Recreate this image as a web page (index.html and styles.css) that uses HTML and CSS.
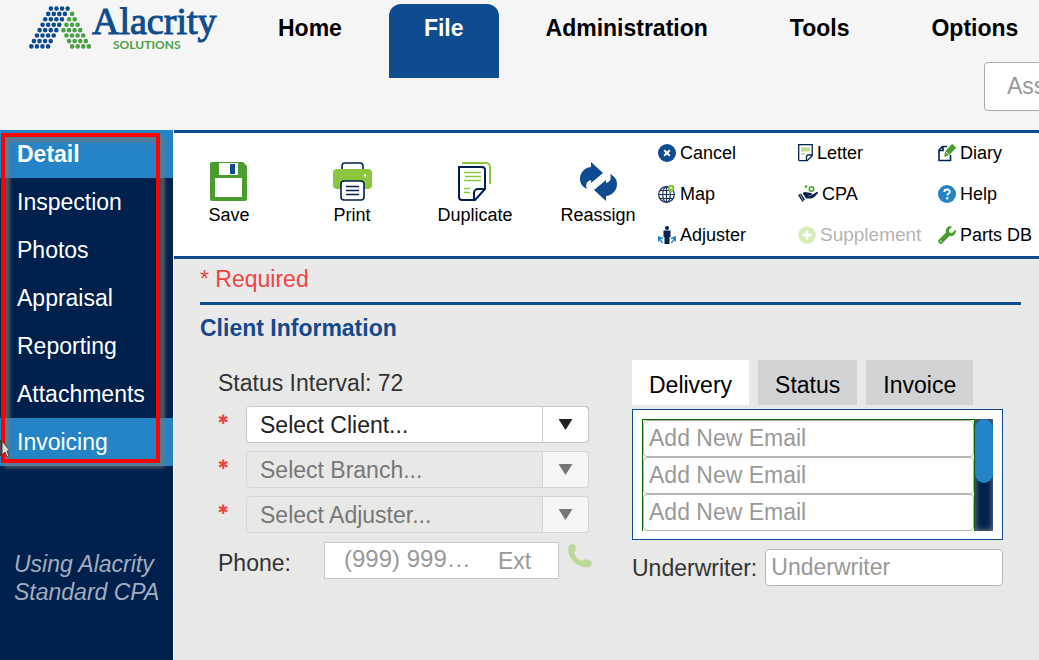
FILE: index.html
```html
<!DOCTYPE html>
<html lang="en">
<head>
<meta charset="utf-8">
<title>Alacrity Solutions</title>
<link rel="stylesheet" href="styles.css">
</head>
<body>
<header class="header">
  <div class="header-row">
    <div class="logo">
      <svg class="logo-mark" viewBox="87 20 187 128" width="62" height="43" fill="none" stroke-width="14" stroke-linecap="round" stroke-dasharray="0 16.8" aria-hidden="true">
        <path stroke="#0f4c8f" d="M153 27h51M145 43h51M136 59h51M128 76h51M119 92h51M111 108h51M102 125h51M94 141h51"/>
        <path stroke="#4ba046" d="M217 43h1M208 59h17M200 76h34M191 92h51M200 108h51M208 125h51M217 141h51"/>
      </svg>
      <div class="logo-text">
        <span class="logo-name">Alacrity</span>
        <span class="logo-sub">SOLUTIONS</span>
      </div>
    </div>
    <nav class="nav">
      <a href="#">Home</a>
      <a href="#" class="nav-active">File</a>
      <a href="#">Administration</a>
      <a href="#">Tools</a>
      <a href="#">Options</a>
    </nav>
  </div>
  <input class="search" type="text" placeholder="Ass" aria-label="Search">
</header>

<div class="page">
  <aside class="sidebar">
    <nav class="side-nav">
      <a href="#" class="side-current side-bold">Detail</a>
      <a href="#">Inspection</a>
      <a href="#">Photos</a>
      <a href="#">Appraisal</a>
      <a href="#">Reporting</a>
      <a href="#">Attachments</a>
      <a href="#" class="side-current">Invoicing</a>
      <span class="callout"></span>
      <svg class="cursor" width="11" height="18" viewBox="0 0 11 18" aria-hidden="true">
        <path d="M0 1h1v14H0z" fill="#fff" stroke="#111"/>
        <path d="M2 1v14l3-3 2 5 2-1-2-5h3z" fill="#ddd" stroke="#444"/>
      </svg>
    </nav>
    <p class="side-note">Using Alacrity Standard CPA</p>
  </aside>

  <main class="main">
    <div class="toolbar">
      <div class="big-tools">
        <button type="button" class="big-tool">
          <svg width="38" height="39" viewBox="0 0 38 39"><path d="M2 0h31l4 4v33a2 2 0 0 1-2 2H2a2 2 0 0 1-2-2V2a2 2 0 0 1 2-2z" fill="#4a9c2d"/><path d="M9 1h19v12H9zM5 16h27v19H5z" fill="#fff"/><path d="M20 2h5v10h-5z" fill="#0f4c8f"/></svg>
          Save
        </button>
        <button type="button" class="big-tool">
          <svg width="39" height="39" viewBox="0 0 39 39"><path d="M9 8V4a3 3 0 0 1 3-3h15a3 3 0 0 1 3 3v4" fill="none" stroke="#00204e" stroke-width="1.6"/><rect y="7" width="39" height="20" rx="4" fill="#8cc63f"/><circle cx="32" cy="13.500" r="1.200" fill="#fff"/><rect x="8" y="19" width="23" height="19" rx="3" fill="#fff" stroke="#00204e" stroke-width="1.6"/><path d="M13 24.500h13M13 28.500h13M13 32.500h13" stroke="#00204e" stroke-width="1.6"/></svg>
          Print
        </button>
        <button type="button" class="big-tool">
          <svg width="34" height="39" viewBox="0 0 34 39" fill="none"><path d="M4 1h24a4 4 0 0 1 4 4v17" stroke="#8cc63f" stroke-width="2"/><path d="M2 5h22a3 3 0 0 1 3 3v19L17 38H4a3 3 0 0 1-3-3V5z" fill="#fff" stroke="#00204e" stroke-width="2"/><path d="M16 38v-7a4 4 0 0 1 4-4h7" stroke="#00204e" stroke-width="2"/><path d="M6 10.500h17M7 14.500h16M6 18.500h17M6 26.500h6M6 30.500h6" stroke="#8cc63f" stroke-width="1.500"/></svg>
          Duplicate
        </button>
        <button type="button" class="big-tool">
          <svg width="37" height="39" viewBox="0 0 37 39" fill="#0f4c8f"><path d="M11 0v5C3 6 0 12 0 17c0 5 3 8 7 10-2-5 0-8 4-9v3L23 11z"/><path d="M26 39v-5c8-1 11-7 11-12 0-5-3-8-7-10 2 5 0 8-4 9v-3L14 28z"/></svg>
          Reassign
        </button>
      </div>
      <div class="small-tools">
        <button type="button" class="small-tool">
          <svg width="18" height="18" viewBox="0 0 18 18"><circle cx="9" cy="9" r="9" fill="#0f4c8f"/><path d="m6.200 6.200 5.600 5.600m0-5.600-5.600 5.600" stroke="#fff" stroke-width="2"/></svg>
          Cancel
        </button>
        <button type="button" class="small-tool">
          <svg width="15" height="18" viewBox="0 0 15 18" fill="none"><path d="M.7.700h13.500v11l-5 5H2a1.300 1.300 0 0 1-1.300-1.300z" stroke="#00204e" stroke-width="1.300"/><path d="M8.500 16.500V13a2 2 0 0 1 2-2H14" stroke="#00204e" stroke-width="1.300"/><path d="M3 3.500h9v4H3zM3 9h4v1.500H3z" fill="#b9dc8c"/></svg>
          Letter
        </button>
        <button type="button" class="small-tool">
          <svg width="18" height="18" viewBox="0 0 18 18" fill="none"><path d="M5.500 2.500h-1L1 6v10.500h11.500V11M1 6.500h4V3M5 2.500h4" stroke="#00204e" stroke-width="1.600"/><path d="m6 13 1.500-6L13.500.500a1 1 0 0 1 1.500 0l2.500 2.500a1 1 0 0 1 0 1.500L11 11z" fill="#4a9c2d"/><path d="m8 8 2.500 2.500" stroke="#fff"/></svg>
          Diary
        </button>
        <button type="button" class="small-tool">
          <svg width="18" height="18" viewBox="0 0 18 18" fill="none"><circle cx="8.500" cy="9.500" r="7.800" stroke="#1d3765" stroke-width="1.300"/><ellipse cx="8.500" cy="9.500" rx="3.800" ry="7.800" stroke="#1d3765" stroke-width="1.200"/><path d="M8.500 2v15M1 9.500h15M2 5.500h13M2 13.500h13" stroke="#1d3765" stroke-width="1.200"/><path d="M13 8.500C11 5.500 10 4.500 10 3a3 3 0 0 1 6.500 0c0 1.500-1.500 2.500-3.500 5.500z" fill="#8cc63f"/><circle cx="13.200" cy="3" r="1" fill="#fff"/></svg>
          Map
        </button>
        <button type="button" class="small-tool">
          <svg width="20" height="17" viewBox="0 0 20 17" fill="none"><path d="m0 10 3-1.500 4 6L4.500 17zM4.500 8C8 6 9 8 13 8c1 0 1 2 0 2H9.500c3 1 5 0 9-3 1-.5 2 .5 1 1.500-3 4-5 5-8 5H8z" fill="#00204e"/><path d="M2 9.500 5.500 16" stroke="#fff" stroke-width=".6"/><circle cx="13.500" cy="4" r="2.200" stroke="#4a9c2d" stroke-width="1.600"/><circle cx="8" cy="1.500" r="1.300" fill="#4a9c2d"/></svg>
          CPA
        </button>
        <button type="button" class="small-tool">
          <svg width="18" height="18" viewBox="0 0 18 18"><circle cx="9" cy="9" r="9" fill="#2484c6"/><path d="M6.200 7c.2-3.500 5.800-3.200 5.600 0-.1 1.600-2.500 1.600-2.500 3.500" fill="none" stroke="#fff" stroke-width="1.800"/><circle cx="9.200" cy="13.300" r="1.200" fill="#fff"/></svg>
          Help
        </button>
        <button type="button" class="small-tool">
          <svg width="18" height="18" viewBox="0 0 18 18" fill="none"><circle cx="9" cy="2" r="2" fill="#00204e"/><path d="M5.500 4.500h7V11h-1v7h-5v-7h-1z" fill="#00204e"/><path d="M5 16.500c-1 0-2.500-2-3.500-4.500M.7 15.500V11L5 12.500M13 16.500c1 0 2.500-2 3.500-4.500M17.300 15.500V11L13 12.500" stroke="#2484c6" stroke-width="1.500"/></svg>
          Adjuster
        </button>
        <button type="button" class="small-tool small-tool-off" disabled>
          <svg width="18" height="18" viewBox="0 0 18 18"><circle cx="9" cy="9" r="8.700" fill="#d7ebbb"/><path d="M9 4.500v9M4.500 9h9" stroke="#fff" stroke-width="2.600"/></svg>
          Supplement
        </button>
        <button type="button" class="small-tool">
          <svg width="18" height="18" viewBox="0 0 18 18"><path d="M14 .500 11 4l.5 2.500L14 7l3.500-3.500c1 3.500-1.500 7.500-6 6.500l-7 7A2.400 2.400 0 0 1 1 13.500l7-7C7 2.500 10.500-.5 14 .500z" fill="#4a9c2d"/><circle cx="2.800" cy="15.200" r=".8" fill="#fff"/></svg>
          Parts DB
        </button>
      </div>
    </div>

    <form class="content">
      <p class="required">* Required</p>
      <h2 class="section-title">Client Information</h2>
      <div class="panel">
        <div class="col-left">
          <p class="status">Status Interval: 72</p>
          <div class="field">
            <span class="star">✱</span>
            <div class="combo">
              <select aria-label="Client"><option>Select Client...</option></select>
              <span class="combo-arrow"></span>
            </div>
          </div>
          <div class="field">
            <span class="star">✱</span>
            <div class="combo combo-off">
              <select aria-label="Branch" disabled><option>Select Branch...</option></select>
              <span class="combo-arrow"></span>
            </div>
          </div>
          <div class="field">
            <span class="star">✱</span>
            <div class="combo combo-off">
              <select aria-label="Adjuster" disabled><option>Select Adjuster...</option></select>
              <span class="combo-arrow"></span>
            </div>
          </div>
          <div class="phone-row">
            <label for="phone">Phone:</label>
            <div class="phone-box">
              <input id="phone" class="phone-number" type="tel" placeholder="(999) 999…">
              <input class="phone-ext" type="text" placeholder="Ext" aria-label="Extension">
            </div>
            <svg class="phone-icon" width="24" height="24" viewBox="0 0 24 24" aria-hidden="true"><path d="M1 2C2 0 6 0 7 1c1 2 1 5 0 6-1 1-1 2 0 4 1 2 3 4 5 5 2 1 3 1 4 0 2-1 5 0 7 1 1 1 1 5-1 6-6 1-12-1-16-5S-1 8 1 2z" fill="#bcd896"/></svg>
          </div>
        </div>

        <div class="col-right">
          <div class="tabs" role="tablist">
            <button type="button" role="tab" class="tab tab-on" aria-selected="true">Delivery</button>
            <button type="button" role="tab" class="tab">Status</button>
            <button type="button" role="tab" class="tab">Invoice</button>
          </div>
          <div class="emails">
            <div class="email-list">
              <input type="email" placeholder="Add New Email" aria-label="Email 1">
              <input type="email" placeholder="Add New Email" aria-label="Email 2">
              <input type="email" placeholder="Add New Email" aria-label="Email 3">
            </div>
            <div class="track"><div class="thumb"></div></div>
          </div>
          <div class="underwriter">
            <label for="underwriter">Underwriter:</label>
            <input id="underwriter" type="text" placeholder="Underwriter">
          </div>
        </div>
      </div>
    </form>
  </main>
</div>
</body>
</html>
```
FILE: styles.css
```css
* { box-sizing: border-box; }

body {
  margin: 0;
  min-height: 100vh;
  display: flex;
  flex-direction: column;
  overflow: hidden;
  background: #fff;
  color: #333;
  font: 23px/28px "Liberation Sans", Arial, sans-serif;
}

p, h2 { margin: 0; }
a { color: inherit; text-decoration: none; }
input, select, button { font: inherit; color: inherit; margin: 0; min-width: 0; }
input::placeholder { color: #999; opacity: 1; }
svg { flex: none; }

/* Header */
.header {
  height: 130px;
  overflow: hidden;
  background: #f5f5f5;
}
.header-row {
  display: flex;
  height: 62px;
  padding: 4px 0 0 29px;
}
.logo { display: flex; width: 214px; flex: none; }
.logo-mark { margin: 2px 1px 0 0; }
.logo-text { display: flex; flex-direction: column; }
.logo-name {
  font: 38px/34px "Liberation Serif", serif;
  color: #0f4c8f;
  -webkit-text-stroke: 1px #0f4c8f;
}
.logo-sub {
  margin-left: 21px;
  font: bold 12px/14px Lato, sans-serif;
  color: #4ba046;
}
.nav { display: flex; gap: 12px; color: #000; font-weight: bold; }
.nav a {
  flex: none;
  height: 74px;
  padding: 10px 35px;
}
.nav .nav-active {
  background: #0f4c8f;
  color: #fff;
  border-radius: 12px 12px 0 0;
}
.search {
  display: block;
  width: 300px;
  height: 49px;
  margin-left: 984px;
  padding: 0 22px;
  border: 1px solid #aaa;
  border-radius: 4px;
  background: #fff;
}

/* Sidebar */
.page { display: flex; flex: 1; gap: 1px; }
.sidebar {
  width: 173px;
  flex: none;
  background: #00204e;
}
.side-nav { position: relative; color: #fff; }
.side-nav a {
  display: block;
  padding: 10px 17px;
}
.side-nav .side-current { background: #2484c6; }
.side-bold { font-weight: bold; }
.callout {
  position: absolute;
  inset: 3px 13px 3px 1px;
  border: 4px solid #f00;
  filter: drop-shadow(4px 4px 2px #777);
  pointer-events: none;
}
.cursor { position: absolute; left: 0; bottom: 8px; }
.side-note {
  padding: 84px 0 0 14px;
  color: #a3adbd;
  font-style: italic;
}

/* Toolbar */
.main {
  flex: 1;
  min-width: 0;
  display: flex;
  flex-direction: column;
}
.toolbar {
  display: flex;
  gap: 5px;
  border: solid #0f4c8f;
  border-width: 3px 0;
  background: #fff;
  color: #000;
  font-size: 18px;
  line-height: 24px;
}
.toolbar button { border: 0; background: none; padding: 0; }
.big-tools {
  display: grid;
  grid-template-columns: repeat(4, 110px);
  gap: 13px;
}
.big-tool {
  display: flex;
  flex-direction: column;
  align-items: center;
  justify-content: center;
  gap: 2px;
}
.small-tools {
  display: grid;
  flex: 1;
  grid-template-columns: 140px 140px auto;
  grid-auto-rows: 41px;
}
.toolbar .small-tool {
  display: flex;
  align-items: center;
  gap: 4px;
  padding-bottom: 2px;
  white-space: nowrap;
}
.toolbar .small-tool-off { color: #b3b3b3; font-size: 19px; }

/* Content */
.content {
  flex: 1;
  padding: 6px 18px 0 26px;
  background: #e9e9e9;
}
.required {
  padding-bottom: 9px;
  border-bottom: 3px solid #0f4c8f;
  color: #ee4444;
}
.section-title {
  padding: 9px 0;
  font-size: 23px;
  line-height: 28px;
  color: #16488a;
}
.panel {
  display: grid;
  grid-template-columns: minmax(0, 1fr) minmax(0, 1fr);
  gap: 43px;
  min-height: 310px;
  padding: 9px 18px;
  background: #e8e8e6;
}
.col-left { display: flex; flex-direction: column; gap: 8px; }
.status { padding: 9px 0 1px; }
.field { display: flex; }
.star {
  width: 28px;
  flex: none;
  color: #ee4444;
  font: bold 13px/28px "DejaVu Sans", sans-serif;
}
.combo { display: grid; flex: 1; height: 37px; color: #222; }
.combo select {
  grid-area: 1 / 1;
  width: 100%;
  padding: 0 50px 0 13px;
  border: 1px solid #c8c8c8;
  border-radius: 4px;
  background: #fff;
  appearance: none;
}
.combo-arrow {
  grid-area: 1 / 1;
  justify-self: end;
  width: 47px;
  display: grid;
  justify-content: center;
  padding-top: 12px;
  border: 1px solid #c8c8c8;
  border-radius: 0 4px 4px 0;
  pointer-events: none;
}
.combo-arrow::before {
  content: "";
  width: 14px;
  height: 11px;
  background: currentColor;
  clip-path: polygon(0 0, 100% 0, 50% 100%);
}
.combo-off { color: #777; }
.combo-off select { background: #e8e8e6; border-color: #d4d4d4; color: #777; opacity: 1; }
.combo-off .combo-arrow { background: #f5f5f4; border-color: #d4d4d4; }
.phone-row { display: flex; align-items: flex-start; padding-top: 1px; }
.phone-row label { width: 106px; flex: none; padding-top: 7px; }
.phone-box {
  display: flex;
  flex: 1;
  min-width: 0;
  height: 37px;
  margin-right: 9px;
  padding: 0 19px;
  gap: 22px;
  border: 1px solid #c8c8c8;
  background: #fff;
}
.phone-box input { border: 0; background: none; padding: 0; }
.phone-box .phone-number { width: 132px; flex: none; padding-bottom: 3px; font-size: 24px; }
.phone-box .phone-ext { flex: 1; width: 0; }
.phone-icon { margin: 2px -3px 0 0; }

.tabs { display: flex; gap: 9px; margin-bottom: 4px; }
.tab {
  height: 45px;
  padding: 5px 17px 0;
  border: 0;
  background: #d1d3d5;
}
.tabs .tab { color: #000; }
.tabs .tab-on { background: #fff; }
.emails {
  display: flex;
  padding: 9px 9px 8px;
  border: 1px solid #0f4c8f;
  background: #fff;
}
.email-list {
  flex: 1;
  display: flex;
  flex-direction: column;
  border: 1px solid #006400;
  border-bottom: 0;
}
.email-list input {
  width: 100%;
  height: 37px;
  padding: 0 5px;
  border: 1px solid #b5b5b5;
  border-radius: 4px;
  background: #fff;
}
.track {
  width: 18px;
  background: #00204e;
  box-shadow: inset 0 0 6px #8a8a8a;
}
.thumb { height: 64px; border-radius: 9px; background: #2484c6; }
.underwriter {
  display: flex;
  align-items: center;
  justify-content: space-between;
  gap: 8px;
  margin-top: 9px;
}
.underwriter input {
  width: 238px;
  height: 37px;
  padding: 0 5px;
  border: 1px solid #b5b5b5;
  border-radius: 4px;
  background: #fff;
}
```
